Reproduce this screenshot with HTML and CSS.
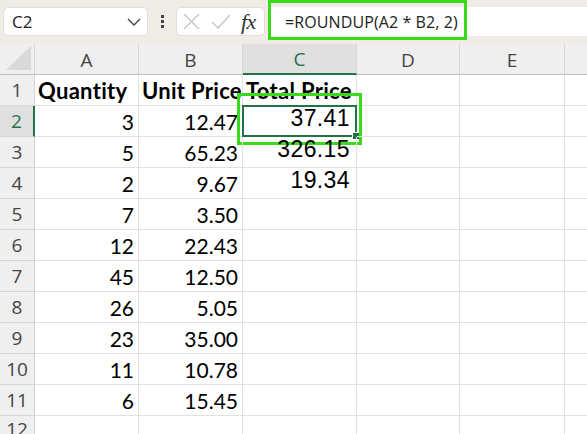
FILE: index.html
```html
<!DOCTYPE html>
<html>
<head>
<meta charset="utf-8">
<link rel="stylesheet" href="styles.css">
</head>
<body>
<div class="topbar">
  <div class="namebox">
    <span class="nb-text">C2</span>
    <svg class="chev" width="14" height="8" viewBox="0 0 14 8"><path d="M1 1 L7 7 L13 1" fill="none" stroke="#444" stroke-width="1.4"/></svg>
  </div>
  <div class="dots"><i></i><i></i><i></i></div>
  <div class="fxbox">
    <svg width="17" height="17" viewBox="0 0 17 17"><path d="M1 1 L16 16 M16 1 L1 16" stroke="#c4c4c4" stroke-width="1.3" fill="none"/></svg>
    <svg width="20" height="16" viewBox="0 0 20 16"><path d="M1 8 L7 14 L19 1" stroke="#c4c4c4" stroke-width="1.3" fill="none"/></svg>
    <span class="fx">fx</span>
  </div>
  <div class="formula">
    <span class="f-text">=ROUNDUP(A2 * B2, 2)</span>
    <span class="hl-formula"></span>
  </div>
</div>
<div class="sheet">
  <div class="corner"><svg width="30" height="25" viewBox="0 0 30 25"><path d="M29 0 L29 24 L4 24 Z" fill="#d9d9d9"/></svg></div>
  <div class="ch">A</div><div class="ch">B</div><div class="ch sel">C</div><div class="ch">D</div><div class="ch">E</div><div class="ch last"></div>

  <div class="rh">1</div><div class="c b">Quantity</div><div class="c b">Unit Price</div><div class="c b">Total Price</div><div class="c"></div><div class="c"></div><div class="c last"></div>
  <div class="rh sel">2</div><div class="c r">3</div><div class="c r">12.47</div><div class="c r ar active">37.41<span class="selbox"></span><span class="handle"></span><span class="hl-cell"></span></div><div class="c"></div><div class="c"></div><div class="c last"></div>
  <div class="rh">3</div><div class="c r">5</div><div class="c r">65.23</div><div class="c r ar">326.15</div><div class="c"></div><div class="c"></div><div class="c last"></div>
  <div class="rh">4</div><div class="c r">2</div><div class="c r">9.67</div><div class="c r ar">19.34</div><div class="c"></div><div class="c"></div><div class="c last"></div>
  <div class="rh">5</div><div class="c r">7</div><div class="c r">3.50</div><div class="c"></div><div class="c"></div><div class="c"></div><div class="c last"></div>
  <div class="rh">6</div><div class="c r">12</div><div class="c r">22.43</div><div class="c"></div><div class="c"></div><div class="c"></div><div class="c last"></div>
  <div class="rh">7</div><div class="c r">45</div><div class="c r">12.50</div><div class="c"></div><div class="c"></div><div class="c"></div><div class="c last"></div>
  <div class="rh">8</div><div class="c r">26</div><div class="c r">5.05</div><div class="c"></div><div class="c"></div><div class="c"></div><div class="c last"></div>
  <div class="rh">9</div><div class="c r">23</div><div class="c r">35.00</div><div class="c"></div><div class="c"></div><div class="c"></div><div class="c last"></div>
  <div class="rh">10</div><div class="c r">11</div><div class="c r">10.78</div><div class="c"></div><div class="c"></div><div class="c"></div><div class="c last"></div>
  <div class="rh">11</div><div class="c r">6</div><div class="c r">15.45</div><div class="c"></div><div class="c"></div><div class="c"></div><div class="c last"></div>
  <div class="rh rh-cut">12</div><div class="c"></div><div class="c"></div><div class="c"></div><div class="c"></div><div class="c"></div><div class="c last"></div>
</div>
</body>
</html>
```
FILE: styles.css
```css
html, body {
  margin: 0;
  padding: 0;
  width: 587px;
  height: 434px;
  overflow: hidden;
  background: #ffffff;
}
.topbar {
  height: 44px;
  background: #efebe6;
  display: flex;
  align-items: flex-start;
  padding-top: 7px;
  box-sizing: border-box;
  font-family: "Open Sans", "Noto Sans", sans-serif;
}
.namebox {
  margin-left: 3px;
  width: 145px;
  height: 29px;
  box-sizing: border-box;
  background: #fff;
  border: 1px solid #e2ded8;
  border-radius: 5px;
  display: flex;
  align-items: center;
  justify-content: space-between;
  padding: 0 6px 0 8px;
}
.nb-text {
  font-size: 17px;
  color: #222;
}
.dots {
  width: 28px;
  height: 29px;
  display: flex;
  flex-direction: column;
  align-items: center;
  justify-content: center;
  gap: 2px;
}
.dots i {
  display: block;
  width: 3px;
  height: 3px;
  background: #444;
}
.fxbox {
  width: 89px;
  height: 29px;
  box-sizing: border-box;
  background: #fff;
  border: 1px solid #e2ded8;
  border-radius: 5px;
  display: flex;
  align-items: center;
  padding-left: 6px;
  gap: 11px;
}
.fx {
  font-family: "Liberation Serif", "DejaVu Serif", serif;
  font-style: italic;
  font-size: 22px;
  color: #333;
  letter-spacing: -0.5px;
  margin-left: -1px;
}
.formula {
  position: relative;
  flex: 1;
  margin-left: 3px;
  height: 29px;
  background: #fff;
  border-radius: 5px 0 0 5px;
  display: flex;
  align-items: center;
  padding-left: 17px;
}
.f-text {
  font-size: 16px;
  color: #222;
  letter-spacing: 0.1px;
}
.hl-formula {
  position: absolute;
  left: 0;
  top: -7px;
  width: 199px;
  height: 40px;
  box-sizing: border-box;
  border: 3px solid #3bd81c;
}
.sheet {
  display: grid;
  grid-template-columns: 35px 104px 104px 114px 103px 105px 1fr;
  grid-template-rows: repeat(13, 31px);
}
.corner {
  background: #efefef;
  border-right: 1px solid #d6d6d6;
  border-bottom: 1px solid #bdbdbd;
  display: flex;
  align-items: flex-end;
  justify-content: flex-end;
  padding: 0 2px 3px 0;
}
.ch {
  background: #efefef;
  border-right: 1px solid #d6d6d6;
  border-bottom: 1px solid #bdbdbd;
  font-family: "Open Sans", "Noto Sans", sans-serif;
  font-size: 19px;
  color: #444;
  display: flex;
  align-items: center;
  justify-content: center;
  padding-top: 1px;
}
.ch.sel {
  background: #e0e0e0;
  color: #217346;
  border-bottom: 2px solid #217346;
}
.ch.last { border-right: none; }
.rh {
  background: #efefef;
  border-right: 1px solid #d6d6d6;
  border-bottom: 1px solid #d6d6d6;
  font-family: "Open Sans", "Noto Sans", sans-serif;
  font-size: 19px;
  color: #444;
  display: flex;
  align-items: center;
  justify-content: center;
}
.rh-cut {
  align-items: flex-start;
  padding-top: 2px;
  line-height: 22px;
}
.rh.sel {
  background: #e0e0e0;
  color: #217346;
  border-right: 2px solid #217346;
}
.c {
  border-right: 1px solid #e1e1e1;
  border-bottom: 1px solid #e1e1e1;
  font-family: Lato, "Noto Sans", sans-serif;
  font-size: 21px;
  color: #000;
  display: flex;
  align-items: flex-end;
  padding: 0 4px 2px 3px;
  white-space: nowrap;
  position: relative;
}
.c.last { border-right: none; }
.c.b {
  font-weight: 700;
  font-size: 22px;
  letter-spacing: 0.3px;
  padding-bottom: 1px;
}
.c.r { justify-content: flex-end; }
.c.ar {
  font-family: "Liberation Sans", Arial, sans-serif;
  font-size: 23px;
  letter-spacing: 0.4px;
  padding-right: 6px;
  padding-bottom: 4px;
}
.selbox {
  position: absolute;
  left: -1px;
  top: -1px;
  right: -1px;
  bottom: -1px;
  border: 2px solid #217346;
}
.handle {
  position: absolute;
  right: -4px;
  bottom: -4px;
  width: 6px;
  height: 6px;
  background: #217346;
  border: 1px solid #fff;
}
.hl-cell {
  position: absolute;
  left: -6px;
  top: -13px;
  right: -6px;
  bottom: -9px;
  border: 3px solid #3bd81c;
}
```
